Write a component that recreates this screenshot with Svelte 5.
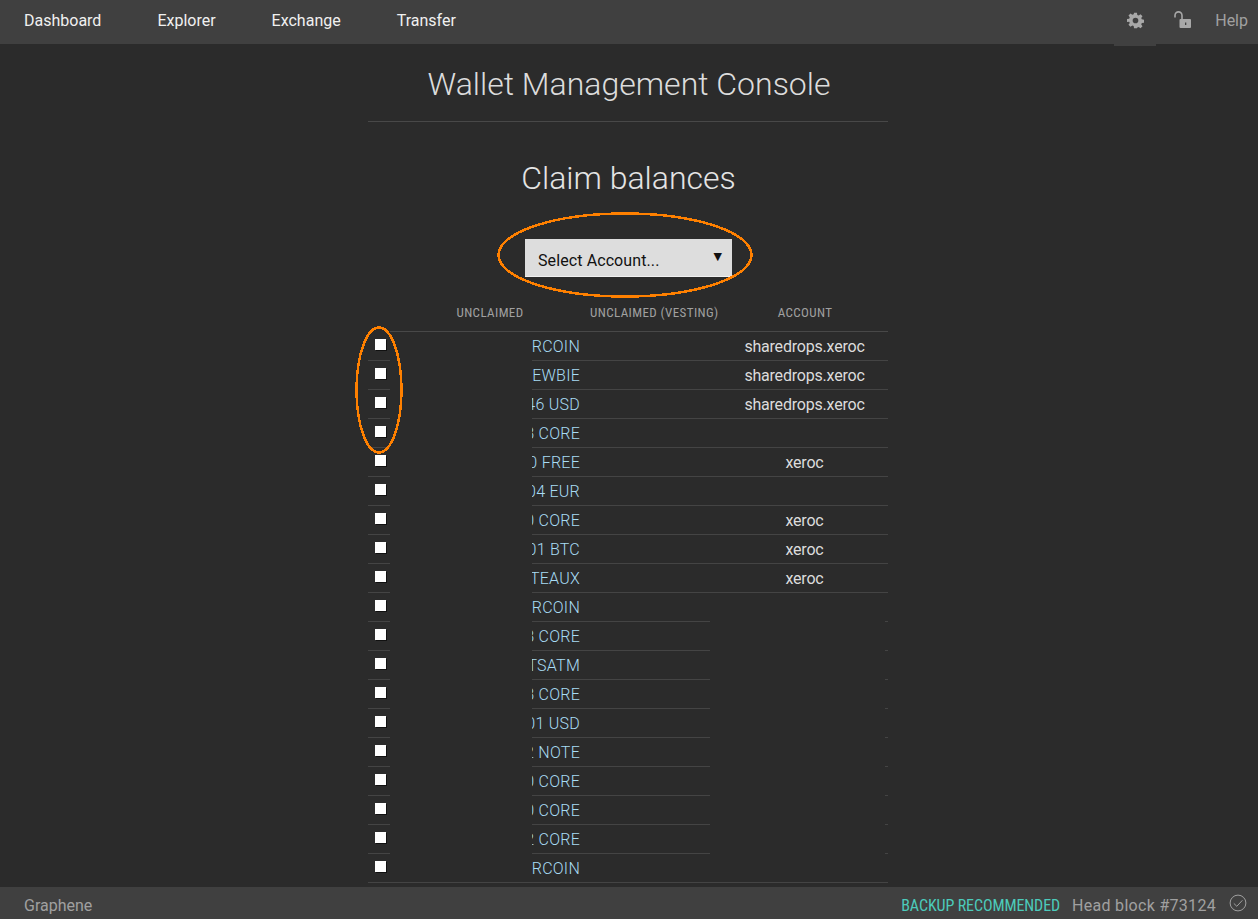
<script lang="ts">
	const nav = ['Dashboard', 'Explorer', 'Exchange', 'Transfer'];

	const rows = [
		{ amount: '1000 SHAREDROPSTARCOIN', account: 'sharedrops.xeroc', open: false },
		{ amount: '1000 SHARENEWBIE', account: 'sharedrops.xeroc', open: false },
		{ amount: '0.0146 USD', account: 'sharedrops.xeroc', open: false },
		{ amount: '4183.3338 CORE', account: '', open: false },
		{ amount: '100.0000 FREE', account: 'xeroc', open: false },
		{ amount: '0.0004 EUR', account: '', open: false },
		{ amount: '12.9000 CORE', account: 'xeroc', open: false },
		{ amount: '0.00001 BTC', account: 'xeroc', open: false },
		{ amount: '25 CHATEAUX', account: 'xeroc', open: false },
		{ amount: '3000 STARCOIN', account: '', open: true },
		{ amount: '41.5338 CORE', account: '', open: true },
		{ amount: '200 BITSATM', account: '', open: true },
		{ amount: '77.0018 CORE', account: '', open: true },
		{ amount: '0.0001 USD', account: '', open: true },
		{ amount: '0.0002 NOTE', account: '', open: true },
		{ amount: '88.4000 CORE', account: '', open: true },
		{ amount: '16.2000 CORE', account: '', open: true },
		{ amount: '55.1212 CORE', account: '', open: true },
		{ amount: '1500 STARCOIN', account: '', open: true }
	];
</script>

<div class="page">
	<header class="topbar">
		<nav class="nav">
			{#each nav as item}
				<a href="#top" class="nav-link">{item}</a>
			{/each}
		</nav>
		<div class="tools">
			<span class="tool tool-active" aria-label="Settings">
				<svg width="17" height="17" viewBox="0 0 24 24" fill="#a8a8a8">
					<path
						fill-rule="evenodd"
						d="M10 1h4l.6 3.1 1.9.8 2.6-1.8 2.8 2.8-1.8 2.6.8 1.9 3.1.6v4l-3.1.6-.8 1.9 1.8 2.6-2.8 2.8-2.6-1.8-1.9.8L14 23h-4l-.6-3.1-1.9-.8-2.6 1.8-2.8-2.8 1.8-2.6-.8-1.9L0 14v-4l3.1-.6.8-1.9-1.8-2.6 2.8-2.8 2.6 1.8 1.9-.8zM12 8a4 4 0 1 0 0 8 4 4 0 0 0 0-8z"
					/>
				</svg>
			</span>
			<span class="tool tool-lock" aria-label="Unlocked">
				<svg width="18" height="18" viewBox="0 0 18 18">
					<path d="M1 6.5V4.4a3.5 3.5 0 0 1 7 0V9" fill="none" stroke="#a8a8a8" stroke-width="1.6" />
					<rect x="5.5" y="8" width="11.5" height="9" rx="1" fill="#a8a8a8" />
					<rect x="11" y="11.5" width="1.3" height="2.5" fill="#404040" />
				</svg>
			</span>
			<a href="#top" class="help">Help</a>
		</div>
	</header>

	<main class="main">
		<div class="content">
			<h1 class="title">Wallet Management Console</h1>
			<h2 class="subtitle">Claim balances</h2>

			<div class="select-wrap">
				<div class="select">
					<span>Select Account...</span>
					<span class="caret">▼</span>
				</div>
				<svg class="mark mark-select" width="260" height="90" viewBox="0 0 260 90">
					<ellipse cx="130" cy="45" rx="126.5" ry="41.5" />
				</svg>
			</div>

			<div class="table">
				<svg class="mark mark-checks" width="50" height="130" viewBox="0 0 50 130">
					<ellipse cx="25" cy="65" rx="22.5" ry="62.5" />
				</svg>
				<div class="thead">
					<span class="th-empty"></span>
					<span class="th">Unclaimed</span>
					<span class="th">Unclaimed (vesting)</span>
					<span class="th th-account">Account</span>
				</div>
				{#each rows as row, i}
					<div class="row" class:last={i === rows.length - 1}>
						<div class="cell check"><span class="box"></span></div>
						<div class="gap"></div>
						<div class="cell amount"><span>{row.amount}</span></div>
						<div class="cell account" class:open={row.open}>{row.account}</div>
						<div class="cell tail"></div>
					</div>
				{/each}
			</div>
		</div>
	</main>

	<footer class="footer">
		<span class="brand">Graphene</span>
		<div class="status">
			<span class="backup">BACKUP RECOMMENDED</span>
			<span class="block">Head block #73124</span>
			<svg width="18" height="18" viewBox="0 0 18 18" fill="none" stroke="#a0a0a0">
				<circle cx="9" cy="9" r="7.9" />
				<path d="M4.8 9.4l3 2.9 5.6-6" />
			</svg>
		</div>
	</footer>
</div>

<style>
	:global(body) {
		margin: 0;
		background: #2b2b2b;
	}

	.page {
		display: flex;
		flex-direction: column;
		height: 919px;
		overflow: hidden;
		font-family: Roboto, 'Liberation Sans', sans-serif;
		color: #e0e0e0;
	}

	.topbar {
		display: flex;
		flex: 0 0 44px;
		justify-content: space-between;
		height: 44px;
		background: #404040;
	}

	.nav {
		display: flex;
		gap: 56px;
		padding-left: 24px;
	}

	.nav-link {
		font-size: 16px;
		line-height: 41px;
		color: #f0f0f0;
		text-decoration: none;
	}

	.tools {
		display: flex;
	}

	.tool {
		display: flex;
		align-items: center;
		justify-content: center;
		height: 40px;
	}

	.tool-active {
		width: 42px;
		height: 46px;
		padding-bottom: 6px;
		box-sizing: border-box;
		background: #404040;
	}

	.tool-lock {
		width: 53px;
		box-sizing: border-box;
	}

	.help {
		padding: 0 10px 0 6px;
		font-size: 16px;
		line-height: 41px;
		color: #a0a0a0;
		text-decoration: none;
	}

	.main {
		flex: 1;
		overflow: hidden;
		padding-right: 2px;
	}

	.content {
		width: 520px;
		margin: 0 auto;
	}

	.title {
		margin: 0;
		padding: 21px 0 18px 2px;
		border-bottom: 1px solid #484848;
		font-size: 32px;
		font-weight: 300;
		line-height: 38px;
		text-align: center;
		color: #dcdcdc;
	}

	.subtitle {
		margin: 0;
		padding: 37px 0 0 1px;
		font-size: 32px;
		font-weight: 300;
		line-height: 38px;
		text-align: center;
		color: #e4e4e4;
	}

	.select-wrap {
		position: relative;
		display: flex;
		justify-content: center;
		margin-top: 42px;
		padding-left: 1px;
	}

	.select {
		display: flex;
		justify-content: space-between;
		box-sizing: border-box;
		width: 207px;
		height: 38px;
		padding: 0 13px;
		border-bottom: 1px solid #f0f0f0;
		background: #dddddd;
		color: #111;
		font-size: 16px;
		line-height: 43px;
		letter-spacing: 0.1px;
	}

	.caret {
		font-family: 'DejaVu Sans', sans-serif;
		font-size: 11px;
		line-height: 36px;
		letter-spacing: 0;
		margin-right: -3px;
	}

	.mark {
		position: absolute;
		fill: none;
		stroke: #ff8000;
		stroke-width: 2.5;
		shape-rendering: crispEdges;
		pointer-events: none;
	}

	.mark-select {
		left: 127px;
		top: -29px;
	}

	.mark-checks {
		left: -14px;
		top: 29px;
		z-index: 1;
	}

	.table {
		position: relative;
		margin-top: 19px;
	}

	.thead {
		display: grid;
		grid-template-columns: 22px 200px 128px 1fr;
		height: 36px;
		font-size: 13px;
		font-stretch: 75%;
		letter-spacing: 0.4px;
		line-height: 34px;
		text-align: center;
		text-transform: uppercase;
		white-space: nowrap;
		color: #a0a0a0;
	}

	.th {
		border-bottom: 1px solid #484848;
	}

	.th-account {
		padding-left: 4px;
	}

	.row {
		display: grid;
		grid-template-columns: 22px 142px 178px 175px 3px;
		height: 29px;
		font-size: 16px;
		line-height: 29px;
	}

	.cell {
		box-sizing: border-box;
		height: 29px;
		border-bottom: 1px solid #444444;
	}

	.row.last .gap {
		border-bottom: 1px solid #444444;
	}

	.check {
		position: relative;
	}

	.box {
		position: absolute;
		left: 7px;
		top: 7px;
		width: 11px;
		height: 11px;
		background: #fff;
		box-shadow: 1px 1px 0 #111;
	}

	.amount {
		display: flex;
		justify-content: flex-end;
		overflow: hidden;
		padding-right: 130px;
		white-space: nowrap;
		font-weight: 300;
		letter-spacing: 0.25px;
		color: #a8dcf4;
	}

	.account {
		padding-left: 14px;
		text-align: center;
		letter-spacing: -0.2px;
		color: #dcdcdc;
	}

	.account.open {
		border-bottom-color: transparent;
	}

	.row.last .account {
		border-bottom-color: #444444;
	}

	.footer {
		display: flex;
		flex: 0 0 32px;
		align-items: center;
		justify-content: space-between;
		padding: 0 11px 0 24px;
		background: #404040;
		font-size: 16px;
		color: #a0a0a0;
	}

	.brand {
		padding-top: 4px;
	}

	.status {
		display: flex;
		align-items: center;
		gap: 12px;
	}

	.backup {
		padding-top: 4px;
		font-stretch: 75%;
		letter-spacing: -0.1px;
		color: #4ccbbb;
	}

	.block {
		padding-top: 4px;
		margin-right: 1px;
		letter-spacing: 0.3px;
	}
</style>
